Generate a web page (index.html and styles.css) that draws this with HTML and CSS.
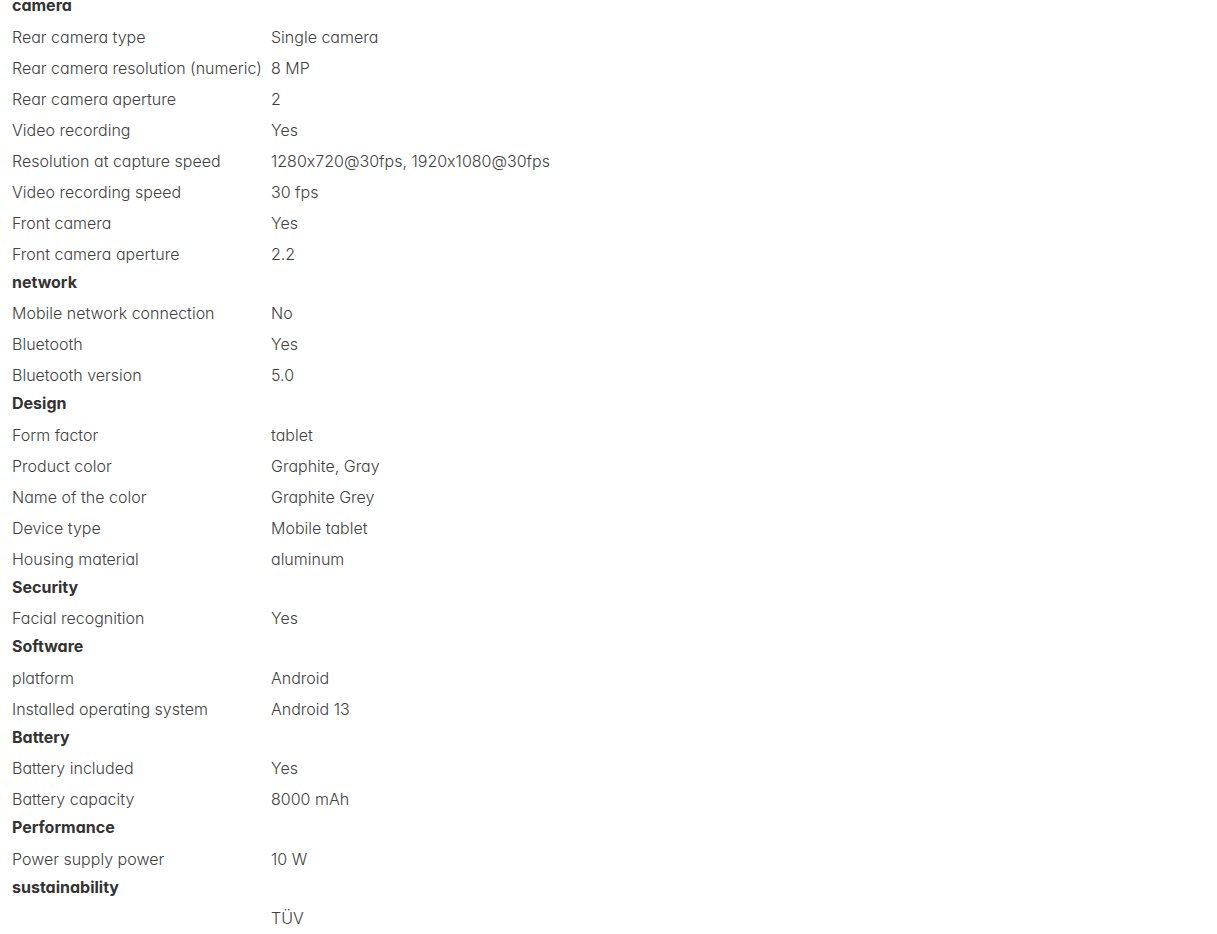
FILE: index.html
```html
<!DOCTYPE html>
<html>
<head>
  <title>Specifications</title>
  <link rel="stylesheet" href="styles.css">
</head>
<body>
  <table class="spec-table">
    <tbody>
      <tr class="spec-group"><th colspan="2">camera</th></tr>
      <tr><td>Rear camera type</td><td>Single camera</td></tr>
      <tr><td>Rear camera resolution (numeric)</td><td>8 MP</td></tr>
      <tr><td>Rear camera aperture</td><td>2</td></tr>
      <tr><td>Video recording</td><td>Yes</td></tr>
      <tr><td>Resolution at capture speed</td><td>1280x720@30fps, 1920x1080@30fps</td></tr>
      <tr><td>Video recording speed</td><td>30 fps</td></tr>
      <tr><td>Front camera</td><td>Yes</td></tr>
      <tr><td>Front camera aperture</td><td>2.2</td></tr>

      <tr class="spec-group"><th colspan="2">network</th></tr>
      <tr><td>Mobile network connection</td><td>No</td></tr>
      <tr><td>Bluetooth</td><td>Yes</td></tr>
      <tr><td>Bluetooth version</td><td>5.0</td></tr>

      <tr class="spec-group"><th colspan="2">Design</th></tr>
      <tr><td>Form factor</td><td>tablet</td></tr>
      <tr><td>Product color</td><td>Graphite, Gray</td></tr>
      <tr><td>Name of the color</td><td>Graphite Grey</td></tr>
      <tr><td>Device type</td><td>Mobile tablet</td></tr>
      <tr><td>Housing material</td><td>aluminum</td></tr>

      <tr class="spec-group"><th colspan="2">Security</th></tr>
      <tr><td>Facial recognition</td><td>Yes</td></tr>

      <tr class="spec-group"><th colspan="2">Software</th></tr>
      <tr><td>platform</td><td>Android</td></tr>
      <tr><td>Installed operating system</td><td>Android 13</td></tr>

      <tr class="spec-group"><th colspan="2">Battery</th></tr>
      <tr><td>Battery included</td><td>Yes</td></tr>
      <tr><td>Battery capacity</td><td>8000 mAh</td></tr>

      <tr class="spec-group"><th colspan="2">Performance</th></tr>
      <tr><td>Power supply power</td><td>10 W</td></tr>

      <tr class="spec-group"><th colspan="2">sustainability</th></tr>
      <tr><td></td><td>TÜV</td></tr>
    </tbody>
  </table>
</body>
</html>
```

FILE: styles.css
```css
body {
  font-family: Inter, Lato, sans-serif;
  margin: 0;
  padding: 0;
  background-color: #fff;
  color: #414141;
}

.spec-table {
  border-collapse: collapse;
  margin: -7px 0 0 12px;
  font-size: 16px;
  font-weight: 300;
  font-feature-settings: "cv11", "calt" 0;
}

.spec-table td {
  padding: 0;
  height: 31px;
  line-height: 31px;
  vertical-align: middle;
  white-space: nowrap;
}

.spec-table td:first-child {
  width: 259px;
}

.spec-group th {
  text-align: left;
  font-weight: 700;
  color: #333;
  padding: 0 0 3px;
  height: 25.5px;
  line-height: 25.5px;
}
```
